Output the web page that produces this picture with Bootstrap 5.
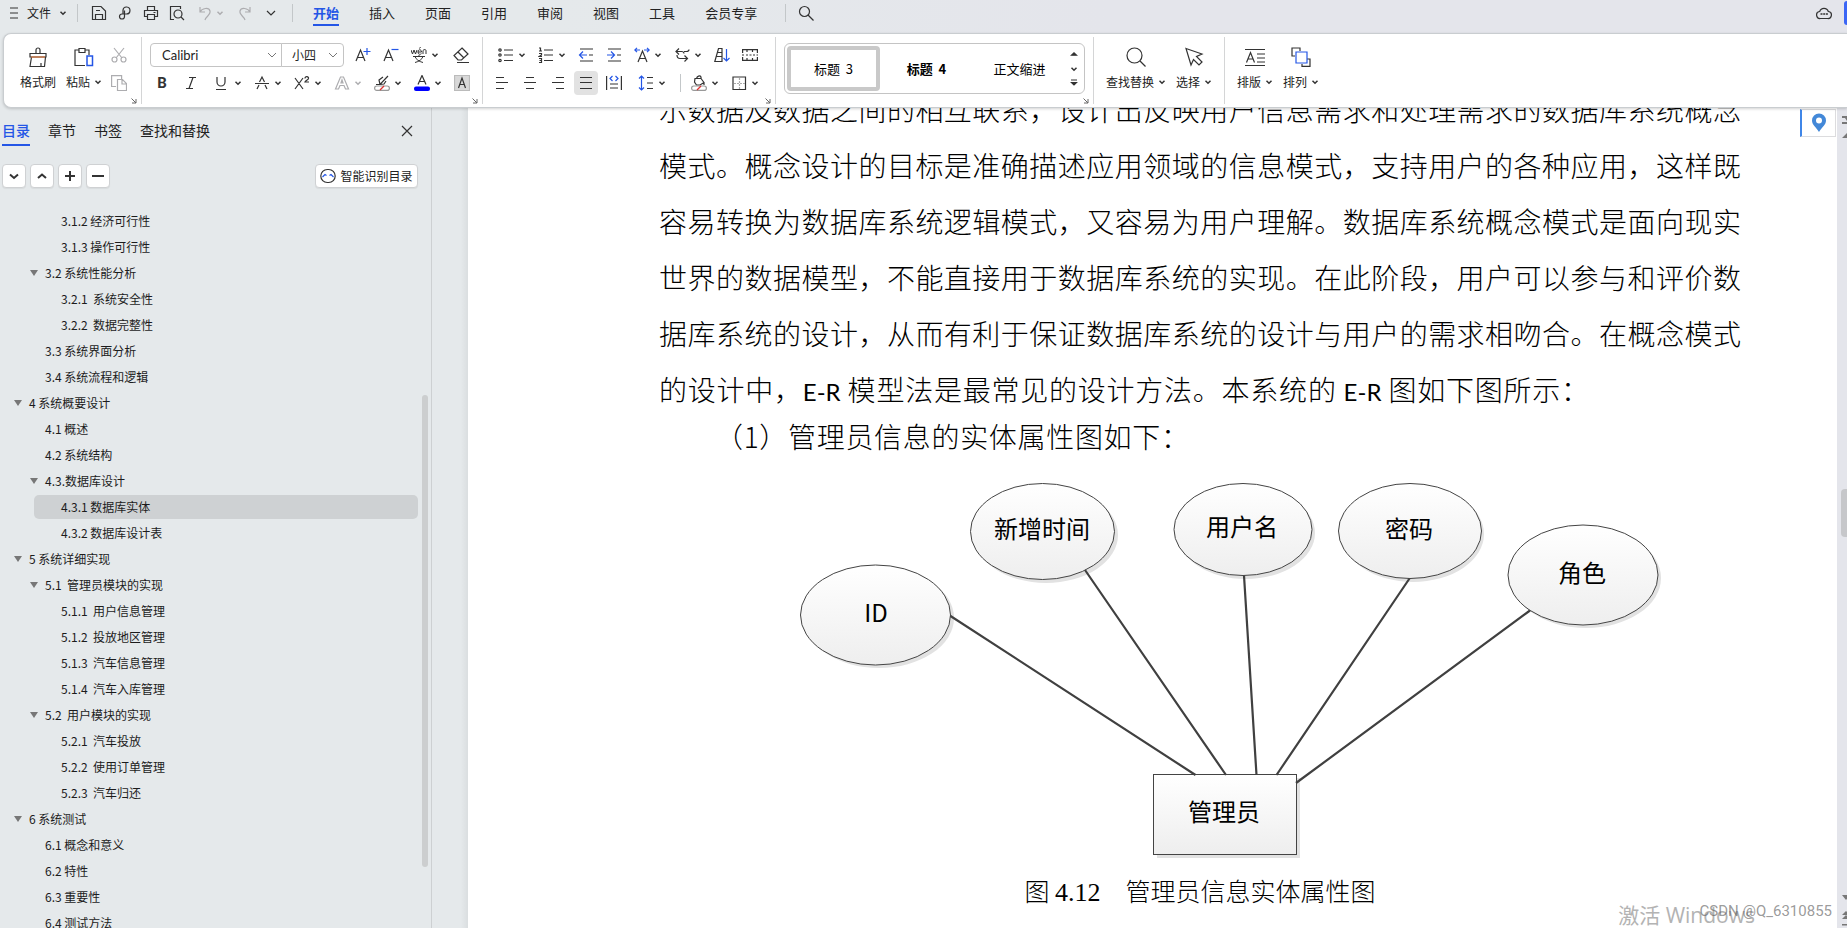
<!DOCTYPE html>
<html lang="zh-CN">
<head>
<meta charset="utf-8">
<meta name="viewport" content="width=device-width, initial-scale=1">
<title>文字编辑器</title>
<link href="https://cdn.jsdelivr.net/npm/bootstrap@5.3.0/dist/css/bootstrap.min.css" rel="stylesheet">
<style>
body{font-family:"Noto Sans CJK SC",sans-serif;font-size:12px;line-height:16px;color:#222;background:linear-gradient(90deg,#e5e9eb,#e5e9eb 30%,#e4e5eb 60%);}
button{background:none;border:0;padding:0;color:inherit;line-height:16px;font-size:inherit}
svg{flex:none;display:block;fill:none;stroke:#333;stroke-width:1.2}
.blue{stroke:#2456e6}
.dim svg{stroke:#adadb0}
.titlebar{height:33px;padding-bottom:8px}
.file-btn{margin:0 10px 0 9px}
.bar-line{width:1px;height:18px;background:#c3c7c9;flex:none}
.q-btn{width:26px;height:24px}
.undo-btn{width:42px}
.menu-row{gap:30px;margin:0 28px 0 20px}
.menu-link{font-size:13px;line-height:22px;color:#222;text-decoration:none;border-bottom:2px solid transparent;height:27px;padding-top:3px}
.menu-link.on{color:#2456e6;font-weight:700;border-color:#2456e6}
.account{width:3px;height:24px;background:#3b66f5;border-radius:4px 0 0 4px;margin-left:12px}
.ribbon{margin-left:3px;height:75px;background:#fff;border:1px solid #c9cdd0;border-right:0;border-radius:8px 0 0 8px;box-shadow:0 1px 3px rgba(0,0,0,.18);z-index:2}
.grp{position:relative;border-right:1px solid #d4d5d6;margin:3px 0 4px;padding-top:4px;height:67px;flex:none}
.g-clip{width:138px;padding-left:13px}.g-font{width:341px;padding-left:6px}.g-para{width:293px;padding-left:5px}.g-style{width:318px;padding:6px 8px}.g-find{width:131px;padding-left:12px}.g-sort{width:110px;padding-left:12px;border:0}
.g-find,.g-sort{gap:10px}
.corner{position:absolute;right:4px;bottom:0}
.big{height:50px;padding-top:4px}
.big svg.ic{margin:0 auto 7px}
.wide{width:42px}
.i28{width:28px;height:28px}.i40{width:40px;height:28px;padding-left:6px;gap:4px}.i32{width:32px;height:28px}
.shade{background:#e2e2e2;border-radius:4px;width:24px;height:24px}
.combo{appearance:none;border:1px solid #c4c4c4;height:24px;font-size:12px;line-height:16px;color:#222;background:#fff url("data:image/svg+xml,%3Csvg xmlns='http://www.w3.org/2000/svg' width='10' height='6'%3E%3Cpath d='M1 1l4 4 4-4' fill='none' stroke='%23777'/%3E%3C/svg%3E") no-repeat right 4px center}
.combo-pair{width:194px;margin:0 5px 0 2px}
.face{width:132px;border-radius:4px 0 0 4px;padding:0 11px;font:13px/18px Lato,"Noto Sans CJK SC",sans-serif}
.pts{width:63px;border-radius:0 4px 4px 0;margin-left:-1px;padding:0 10px;background-position:right 5px center}
.glyph{font-family:Roboto,sans-serif;font-size:15px;color:#333}
.gallery{border:1px solid #c4c4c4;border-radius:6px;height:51px;padding:2px}
.gallery button{font-size:13px;color:#000;width:93px}
.gallery .cur{border:4px solid #c9c9c9;border-radius:4px}
.side{width:432px;border-right:1px solid #cdd0d2;flex:none}
.side-tabs{padding:8px 18px 0 2px;gap:18px}
.side-tabs .tab{font-size:14px;line-height:28px;border-bottom:2px solid transparent;height:30px}
.side-tabs .tab.on{color:#2456e6;border-color:#2456e6;font-weight:500}
.tools{padding:18px 13px 0 2px;gap:4px}
.tool{background:#fff;border:1px solid #cfd1d3;border-radius:4px;height:24px;width:24px;box-shadow:0 1px 1px rgba(0,0,0,.06)}
.smart{width:103px;gap:4px}
.tree{margin:20px 0 0;padding:0;list-style:none}
.tree li{padding:1px 0}
.tree a{display:flex;align-items:center;height:24px;margin-right:13px;color:#1c1c1c;text-decoration:none;white-space:pre;border-radius:5px}
.tree .l1 a{margin-left:14px}.tree .l2 a{margin-left:30px}.tree .l3 a{margin-left:34px;padding-left:27px}
.tree .l1 a::before,.tree .l2 a::before{content:"";width:8px;margin-right:7px;flex:none}
.tree .open a::before{height:0;border:solid transparent;border-top-color:#777;border-width:6px 4px 0}
.tree .sel{background:#ced1d3}
.side-scroll{right:3px;top:287px;width:6px;height:472px;background:#cccecf;border-radius:3px}
.gutter{width:36px;flex:none;background:linear-gradient(90deg,transparent 80%,#dadee0)}
.sheet{background:#fff;padding:0 96px 0 191px;color:#000;font-weight:300;min-width:0}
.prose{font-size:28px;line-height:56px;margin:-27px 0 0}
.ln{display:block;white-space:nowrap;text-align:justify;text-align-last:justify}
.ln.end{padding-right:152px}
.er{font-family:Lato,sans-serif;font-size:24px;font-weight:400}
.point{font-size:28px;line-height:32px;text-indent:2em;margin:0;padding-right:552px;white-space:nowrap;text-align-last:justify}
.diagram{width:100%;height:auto;margin-top:8px}
.diagram text{font-size:24px;font-weight:400;fill:#000;stroke:none;text-anchor:middle}
.cap{font-size:25px;line-height:40px;text-align:center;margin:0}
.cap span{font-family:"Liberation Serif",serif;font-size:26px}
.vscroll{width:10px;background:#e4e5eb;flex:none}
.thumb{position:absolute;left:4px;top:381px;width:10px;height:48px;border-radius:4px;background:#c6c7ca}
.vscroll svg{position:absolute;left:4px;fill:#777;stroke:none}
.marks-top{top:8px}.marks-end{bottom:2px}
.pin{right:1px;top:1px;width:36px;height:28px;background:#fff;border:1px solid #dcdcde;border-left:2px solid #3f86e8}
.activate{right:92px;bottom:0;font:21px/26px "Open Sans","Noto Sans CJK SC",sans-serif;color:#b3b3b3}
.credit{right:15px;bottom:7px;font:15px/20px Roboto,sans-serif;color:rgba(90,90,90,.62)}
</style>
</head>
<body class="vh-100 overflow-hidden d-flex flex-column">
<svg width="0" height="0" class="position-absolute"><defs>
<symbol id="car" viewBox="0 0 8 8"><path d="M1.500 2.800L4 5.200 6.500 2.800" stroke-width="1.500"/></symbol>
<symbol id="cor" viewBox="0 0 6 6"><path d="M.5.5L5 5M5 1V5H1" stroke="#666" stroke-width="1"/></symbol>
</defs></svg>

<header class="titlebar d-flex align-items-center flex-shrink-0">
  <button class="file-btn d-flex align-items-center" type="button"><svg width="10" height="14"><path d="M1 2h8M1 7h8M1 12h8"/></svg><span class="ms-2">文件</span><svg class="ms-2" width="8" height="8"><use href="#car"/></svg></button>
  <span class="bar-line me-2"></span>
  <div class="d-flex align-items-center">
    <button class="q-btn d-flex align-items-center justify-content-center" aria-label="保存" type="button"><svg width="16" height="16"><path d="M1.500 1.500h8.500l4.500 4.500v8.500h-13zM4.500 14v-4.500h7V14M5 5.500h4"/></svg></button>
    <button class="q-btn d-flex align-items-center justify-content-center" aria-label="输出" type="button"><svg width="16" height="16"><path d="M6 9.500V5a3.500 3.500 0 1 1 3.500 4H5a2.500 2.500 0 1 0 2.500 2.500V5.500"/></svg></button>
    <button class="q-btn d-flex align-items-center justify-content-center" aria-label="打印" type="button"><svg width="16" height="16"><path d="M4.500 5V1.500h7V5M4 11.500H1.500v-6h13v6H12M4.500 9.500h7v5h-7zM10.500 7.500h2"/></svg></button>
    <button class="q-btn d-flex align-items-center justify-content-center" aria-label="预览" type="button"><svg width="16" height="16"><path d="M5 14.500H1.500v-13h10V4M12 12l3 3"/><circle cx="9" cy="9" r="4"/></svg></button>
    <button class="undo-btn d-flex align-items-center dim ps-2 gap-1" aria-label="撤销" type="button"><svg width="14" height="16"><path d="M2 2v5h5M2 7c2-4 9-5 10-1s-4 5-5 9"/></svg><svg width="8" height="8"><use href="#car"/></svg></button>
    <button class="q-btn d-flex align-items-center justify-content-center dim" aria-label="恢复" type="button"><svg width="14" height="16"><path d="M12 2v5H7M12 7C10 3 3 2 2 6s4 5 5 9"/></svg></button>
    <button class="q-btn d-flex align-items-center justify-content-center" aria-label="更多" type="button"><svg width="12" height="8"><path d="M2 2l4 4 4-4"/></svg></button>
  </div>
  <span class="bar-line ms-2"></span>
  <nav class="menu-row d-flex">
    <a class="menu-link on" href="#">开始</a><a class="menu-link" href="#">插入</a><a class="menu-link" href="#">页面</a><a class="menu-link" href="#">引用</a><a class="menu-link" href="#">审阅</a><a class="menu-link" href="#">视图</a><a class="menu-link" href="#">工具</a><a class="menu-link" href="#">会员专享</a>
  </nav>
  <span class="bar-line me-2"></span>
  <button class="ms-1" aria-label="搜索" type="button"><svg width="16" height="16"><circle cx="6.500" cy="6.500" r="5"/><path d="M10 10l5.500 5.500"/></svg></button>
  <button class="ms-auto" aria-label="云" type="button"><svg width="16" height="14"><path d="M4.500 12.500a3.500 3.500 0 0 1-.8-7 4.500 4.500 0 0 1 8.600 0 3.500 3.500 0 0 1-.8 7z"/><path d="M4.500 8h2M7.200 8h2M9.900 8h2" stroke-width="1.600"/></svg></button>
  <span class="account"></span>
</header>

<section class="ribbon position-relative d-flex flex-shrink-0">
  <div class="grp g-clip d-flex">
    <button class="big wide" type="button"><svg class="ic" width="20" height="20"><path d="M8 6.500V3a2 2 0 0 1 4 0v3.500M2 6.500h16v3.500H2zM3.500 10L2 19.500h14.500L17.500 10M13 19v-3"/><path d="M3 10h14" stroke="#d9743a"/></svg>格式刷</button>
    <button class="big wide ms-1" type="button"><svg class="ic" width="20" height="20"><path d="M5 3H1v15.500h10M15 8V3h-4M5 1.500h6v4H5z"/><path class="blue" d="M13 9h5.500v9.500H13z" stroke-width="1.500"/></svg><span class="d-flex align-items-center justify-content-center">粘贴<svg class="ms-1" width="8" height="8"><use href="#car"/></svg></span></button>
    <div class="dim d-flex flex-column">
      <button class="i28 d-flex align-items-center justify-content-center" aria-label="剪切" type="button"><svg width="16" height="16"><path d="M3 1l8 10M13 1L5 11"/><circle cx="3.500" cy="12.500" r="2.500"/><circle cx="12.500" cy="12.500" r="2.500"/></svg></button>
      <button class="i28 d-flex align-items-center justify-content-center" aria-label="复制" type="button"><svg width="16" height="16"><path d="M5 11.500H.6V.6h10V4M6.500 4.500h5l4 4v7h-9zM11 5v4h4"/></svg></button>
    </div>
    <svg class="corner" width="6" height="6"><use href="#cor"/></svg>
  </div>
  <div class="grp g-font">
    <div class="d-flex align-items-center">
      <div class="combo-pair d-flex"><select class="combo face" aria-label="字体"><option>Calibri</option></select><select class="combo pts" aria-label="字号"><option>小四</option></select></div>
      <button class="i28 d-flex align-items-center justify-content-center" aria-label="增大字号" type="button"><svg width="16" height="16"><path d="M1 14L5.500 3 10 14M2.500 10.500h6"/><path class="blue" d="M12 1v7M8.500 4.500h7"/></svg></button>
      <button class="i28 d-flex align-items-center justify-content-center" aria-label="减小字号" type="button"><svg width="16" height="16"><path d="M1 14L5.500 3 10 14M2.500 10.500h6"/><path class="blue" d="M8.500 2.500h7"/></svg></button>
      <button class="i40 d-flex align-items-center" aria-label="拼音" type="button"><svg width="16" height="16"><path d="M0 3l1.500 4L3 3l1.500 4L6 3M7 5h3.500c0-3-3.500-3-3.500 0s3 2.500 3.500 1.500M12 7V3.500c1-1.500 3-1 3 0V7M8.500 1.500l1-1.500M2 9.500h12M8 8v1.500M4 9.500c1 3 4 5 8 6M12 9.500c-1 3-4 5-8 6" stroke-width="1"/></svg><svg width="8" height="8"><use href="#car"/></svg></button>
      <button class="i32 d-flex align-items-center justify-content-center" aria-label="清除格式" type="button"><svg width="16" height="16"><path d="M9 1l6 6-6.500 6H5L1 8.500zM5 5l6 6M4 15.500h12"/></svg></button>
    </div>
    <div class="d-flex align-items-center">
      <button class="i28 glyph fw-bold" type="button">B</button>
      <button class="i32 d-flex align-items-center justify-content-center" aria-label="倾斜" type="button"><svg width="16" height="14"><path d="M5 1.500h7M2 12.500h7M9 1.500l-4 11"/></svg></button>
      <button class="i40 d-flex align-items-center" aria-label="下划线" type="button"><svg width="16" height="16"><path d="M3 2v5a4 4 0 0 0 8 0V2M2 14.500h10"/></svg><svg width="8" height="8"><use href="#car"/></svg></button>
      <button class="i40 d-flex align-items-center" aria-label="删除线" type="button"><svg width="16" height="16"><path d="M3 14l2-4M13 14l-2-4M5.500 7L8 2l2.500 5M1 8.500h14"/></svg><svg width="8" height="8"><use href="#car"/></svg></button>
      <button class="i40 d-flex align-items-center" aria-label="上标" type="button"><svg width="16" height="16"><path d="M1 3l8 11M9 3L1 14M11 3.500c0-3 4-2 3.500 0-.5 1.500-3 2-3.500 3.500h4"/></svg><svg width="8" height="8"><use href="#car"/></svg></button>
      <button class="i40 d-flex align-items-center dim" aria-label="文字效果" type="button"><svg width="16" height="16"><path d="M1.500 14L6.500 2h3l5 12h-3L10 10.500H6L4.500 14zM7 8h2L8 5z"/></svg><svg width="8" height="8"><use href="#car"/></svg></button>
      <button class="i40 d-flex align-items-center" aria-label="突出显示" type="button"><svg width="16" height="16"><path d="M2 9.500h4L14 1M6 9.500L5 5l4-3M6 9.500l4-.5 2-3"/><rect x=".6" y="11" width="14.800" height="4.400" rx="2.200" stroke="#999"/><path d="M6 15l4-4" stroke="#d33"/></svg><svg width="8" height="8"><use href="#car"/></svg></button>
      <button class="i40 d-flex align-items-center" aria-label="字体颜色" type="button"><svg width="16" height="16"><path d="M4 9.500L8 .5l4 9M5.500 6.500h5"/><rect y="11.500" width="16" height="4.500" rx="2" fill="#00f" stroke="none"/></svg><svg width="8" height="8"><use href="#car"/></svg></button>
      <button class="i28 d-flex align-items-center justify-content-center" aria-label="字符底纹" type="button"><svg width="16" height="16"><path d="M.5.5h15v15H.5z" fill="#d8d8d8" stroke="#bbb"/><path d="M4.500 13L8 3l3.500 10M5.500 9.500h5"/></svg></button>
    </div>
    <svg class="corner" width="6" height="6"><use href="#cor"/></svg>
  </div>
  <div class="grp g-para">
    <div class="d-flex align-items-center ps-1">
      <button class="i40 d-flex align-items-center" aria-label="项目符号" type="button"><svg width="16" height="16"><path d="M6 3h9M6 8h9M6 13.500h9"/><circle cx="2" cy="3" r="1.200"/><circle cx="2" cy="8" r="1.200"/><circle cx="2" cy="13.500" r="1.200"/></svg><svg width="8" height="8"><use href="#car"/></svg></button>
      <button class="i40 d-flex align-items-center" aria-label="编号" type="button"><svg width="16" height="16"><path d="M6 3h9M6 8h9M6 13.500h9M1 1h1.500v3M1 4h3M1 6.500h2.500V8L1 9.500h3M1 11.500h2.500v4H1M1.500 13.500h2"/></svg><svg width="8" height="8"><use href="#car"/></svg></button>
      <button class="i28 d-flex align-items-center justify-content-center" aria-label="减少缩进" type="button"><svg width="16" height="16"><path d="M2 2h13M11 8h4M2 14h13"/><path class="blue" d="M9 8H1.500M5 4.500L1.500 8 5 11.500"/></svg></button>
      <button class="i28 d-flex align-items-center justify-content-center" aria-label="增加缩进" type="button"><svg width="16" height="16"><path d="M2 2h13M11 8h4M2 14h13"/><path class="blue" d="M1 8h7.500M5 4.500L8.500 8 5 11.500"/></svg></button>
      <button class="i40 d-flex align-items-center" aria-label="字符缩放" type="button"><svg width="16" height="16"><path d="M4 15L8.500 4 13 15M5.500 11.500h6"/><path class="blue" d="M6 3H.8M3 .8L.8 3 3 5.200M10 3h5.200M13 .8L15.200 3 13 5.200"/></svg><svg width="8" height="8"><use href="#car"/></svg></button>
      <button class="i40 d-flex align-items-center" aria-label="换行" type="button"><svg width="16" height="16"><path d="M5 1.500l-3 3 3 3M2 4.500h5.500c2 0 2.500 1 2.500 2M15 2.500c0 1.500-1 2-2.500 2H10M3 8c0 2.500 1 3.500 3 3.500h7.500M10.500 8.500l3 3-3 3"/></svg><svg width="8" height="8"><use href="#car"/></svg></button>
      <button class="i28 d-flex align-items-center justify-content-center" aria-label="排序" type="button"><svg width="16" height="16"><path d="M.8 14.500L4.500 1.500H8v13zM3.500 5.500H8M2.500 9.500H8"/><path class="blue" d="M12.500 2v12M9.500 11l3 3 3-3"/></svg></button>
      <button class="i28 d-flex align-items-center justify-content-center" aria-label="显示标记" type="button"><svg width="16" height="16"><path d="M.6 6V2.600h14.800V6M.6 10v3.400h14.800V10M5 3v2M10.500 3v2M5 11v2M10.500 11v2M0 8h2M4 8h2M7.500 8h2M11 8h2M14.500 8H16"/></svg></button>
    </div>
    <div class="d-flex align-items-center">
      <button class="i28 d-flex align-items-center justify-content-center" aria-label="左对齐" type="button"><svg width="14" height="14"><path d="M1 1.500h8M1 6.500h12M1 12.500h8"/></svg></button>
      <button class="i28 d-flex align-items-center justify-content-center" aria-label="居中" type="button"><svg width="14" height="14"><path d="M3 1.500h8M1 6.500h12M3 12.500h8"/></svg></button>
      <button class="i28 d-flex align-items-center justify-content-center" aria-label="右对齐" type="button"><svg width="14" height="14"><path d="M5 1.500h8M1 6.500h12M5 12.500h8"/></svg></button>
      <button class="i28 d-flex align-items-center justify-content-center" aria-label="两端对齐" type="button"><span class="shade d-flex align-items-center justify-content-center"><svg width="14" height="14"><path d="M1 1.500h12M1 6.500h12M1 12.500h12"/></svg></span></button>
      <button class="i28 d-flex align-items-center justify-content-center" aria-label="分散对齐" type="button"><svg width="16" height="16"><path d="M.6 1v14M15.400 1v14M4 9h8M4 13h8"/><path class="blue" d="M6.500 1L4 3.500 6.500 6M9.500 1L12 3.500 9.500 6"/></svg></button>
      <button class="i40 d-flex align-items-center ms-1" aria-label="行距" type="button"><svg width="16" height="16"><path d="M9 2.500h6M9 8h6M9 13.500h6"/><path class="blue" d="M3.500 1v14M1 3.500L3.500 1 6 3.500M1 12.500L3.500 15 6 12.500"/></svg><svg width="8" height="8"><use href="#car"/></svg></button>
      <span class="bar-line ms-2 me-1"></span>
      <button class="i40 d-flex align-items-center" aria-label="底纹" type="button"><svg width="16" height="16"><path d="M4 3.500h6l3 4-4 2.500H5.500L3.500 7zM5.500 3.500C6 1 9 0 10 2v1.500M13 7.500v2.500"/><rect x=".6" y="11" width="14.800" height="4.400" rx="2.200" stroke="#999"/><path d="M6 15l4-4" stroke="#d33"/></svg><svg width="8" height="8"><use href="#car"/></svg></button>
      <button class="i40 d-flex align-items-center" aria-label="边框" type="button"><svg width="16" height="16"><path d="M2 2h12.500v12.500H2z"/><path d="M8.500 3v11M3 8.500h11" stroke="#aaa" stroke-dasharray="2 1"/></svg><svg width="8" height="8"><use href="#car"/></svg></button>
    </div>
    <svg class="corner" width="6" height="6"><use href="#cor"/></svg>
  </div>
  <div class="grp g-style">
    <div class="gallery d-flex">
      <button class="cur" type="button">标题&nbsp; 3</button><button class="fw-bold" type="button">标题&nbsp; 4</button><button type="button">正文缩进</button>
      <span class="d-flex flex-column justify-content-between align-items-center ms-auto me-1 py-1"><svg width="8" height="8"><path d="M1.500 5.200L4 2.800l2.500 2.400z" fill="#333"/></svg><svg width="8" height="8"><use href="#car"/></svg><svg width="8" height="8"><path d="M1 1h6M1.500 3.500L4 6l2.500-2.500z" fill="#333"/></svg></span>
    </div>
    <svg class="corner" width="6" height="6"><use href="#cor"/></svg>
  </div>
  <div class="grp g-find d-flex">
    <button class="big" type="button"><svg class="ic" width="20" height="20"><circle cx="8.500" cy="8.500" r="7.500"/><path d="M14 14l5.500 5.500"/></svg><span class="d-flex align-items-center">查找替换<svg class="ms-1" width="8" height="8"><use href="#car"/></svg></span></button>
    <button class="big" type="button"><svg class="ic" width="20" height="20"><path d="M2 1.500l16 5.500-5.500 2.500 5.500 5.500-3 3-5.500-5.500L7 18z"/></svg><span class="d-flex align-items-center">选择<svg class="ms-1" width="8" height="8"><use href="#car"/></svg></span></button>
  </div>
  <div class="grp g-sort d-flex">
    <button class="big" type="button"><svg class="ic" width="20" height="20"><path d="M0 2.500h20M12 7h8M12 11h8M12 15h8M0 18.500h20M1.500 15.500l4-10 4 10M3 12h5"/></svg><span class="d-flex align-items-center">排版<svg class="ms-1" width="8" height="8"><use href="#car"/></svg></span></button>
    <button class="big" type="button"><svg class="ic" width="20" height="20"><path d="M4 9H1V1h8v3M16 12h3v7.400h-8V17"/><path class="blue" d="M5 5h11v11H5z"/></svg><span class="d-flex align-items-center">排列<svg class="ms-1" width="8" height="8"><use href="#car"/></svg></span></button>
  </div>
</section>

<main class="d-flex flex-fill overflow-hidden position-relative">
  <aside class="side position-relative">
    <div class="side-tabs d-flex align-items-center">
      <button class="tab on" type="button">目录</button><button class="tab" type="button">章节</button><button class="tab" type="button">书签</button><button class="tab" type="button">查找和替换</button>
      <button class="ms-auto" aria-label="关闭" type="button"><svg width="12" height="12"><path d="M1 1l10 10M11 1L1 11"/></svg></button>
    </div>
    <div class="tools d-flex">
      <button class="tool d-flex align-items-center justify-content-center" aria-label="展开" type="button"><svg width="12" height="12"><path d="M2 4.500L6 8l4-3.500" stroke-width="2"/></svg></button>
      <button class="tool d-flex align-items-center justify-content-center" aria-label="收起" type="button"><svg width="12" height="12"><path d="M2 8l4-3.500L10 8" stroke-width="2"/></svg></button>
      <button class="tool d-flex align-items-center justify-content-center" aria-label="增加" type="button"><svg width="12" height="12"><path d="M1 6h10M6 1v10" stroke-width="2"/></svg></button>
      <button class="tool d-flex align-items-center justify-content-center" aria-label="减少" type="button"><svg width="12" height="12"><path d="M0 6h12" stroke-width="2"/></svg></button>
      <button class="tool smart d-flex align-items-center justify-content-center ms-auto" type="button"><svg width="16" height="16"><rect x=".8" y="1.500" width="14.400" height="13" rx="6.500"/><path class="blue" d="M2.500 9l2.500-2.500 1.500 1M9.500 7.500l1.500-1L13.500 9"/></svg>智能识别目录</button>
    </div>
    <ul class="tree">
      <li class="l3"><a href="#">3.1.2 经济可行性</a></li>
      <li class="l3"><a href="#">3.1.3 操作可行性</a></li>
      <li class="l2 open"><a href="#">3.2 系统性能分析</a></li>
      <li class="l3"><a href="#">3.2.1  系统安全性</a></li>
      <li class="l3"><a href="#">3.2.2  数据完整性</a></li>
      <li class="l2"><a href="#">3.3 系统界面分析</a></li>
      <li class="l2"><a href="#">3.4 系统流程和逻辑</a></li>
      <li class="l1 open"><a href="#">4 系统概要设计</a></li>
      <li class="l2"><a href="#">4.1 概述</a></li>
      <li class="l2"><a href="#">4.2 系统结构</a></li>
      <li class="l2 open"><a href="#">4.3.数据库设计</a></li>
      <li class="l3"><a class="sel" href="#">4.3.1 数据库实体</a></li>
      <li class="l3"><a href="#">4.3.2 数据库设计表</a></li>
      <li class="l1 open"><a href="#">5 系统详细实现</a></li>
      <li class="l2 open"><a href="#">5.1  管理员模块的实现</a></li>
      <li class="l3"><a href="#">5.1.1  用户信息管理</a></li>
      <li class="l3"><a href="#">5.1.2  投放地区管理</a></li>
      <li class="l3"><a href="#">5.1.3  汽车信息管理</a></li>
      <li class="l3"><a href="#">5.1.4  汽车入库管理</a></li>
      <li class="l2 open"><a href="#">5.2  用户模块的实现</a></li>
      <li class="l3"><a href="#">5.2.1  汽车投放</a></li>
      <li class="l3"><a href="#">5.2.2  使用订单管理</a></li>
      <li class="l3"><a href="#">5.2.3  汽车归还</a></li>
      <li class="l1 open"><a href="#">6 系统测试</a></li>
      <li class="l2"><a href="#">6.1 概念和意义</a></li>
      <li class="l2"><a href="#">6.2 特性</a></li>
      <li class="l2"><a href="#">6.3 重要性</a></li>
      <li class="l2"><a href="#">6.4 测试方法</a></li>
    </ul>
    <div class="side-scroll position-absolute"></div>
  </aside>
  <div class="gutter"></div>
  <article class="sheet flex-fill position-relative">
    <p class="prose">
      <span class="ln">示数据及数据之间的相互联系，设计出反映用户信息需求和处理需求的数据库系统概念</span>
      <span class="ln">模式。概念设计的目标是准确描述应用领域的信息模式，支持用户的各种应用，这样既</span>
      <span class="ln">容易转换为数据库系统逻辑模式，又容易为用户理解。数据库系统概念模式是面向现实</span>
      <span class="ln">世界的数据模型，不能直接用于数据库系统的实现。在此阶段，用户可以参与和评价数</span>
      <span class="ln">据库系统的设计，从而有利于保证数据库系统的设计与用户的需求相吻合。在概念模式</span>
      <span class="ln end">的设计中，<span class="er">E-R</span> 模型法是最常见的设计方法。本系统的 <span class="er">E-R</span> 图如下图所示：</span>
    </p>
    <p class="point">（1）管理员信息的实体属性图如下：</p>
    <svg class="diagram" viewBox="659 460 1082 410">
      <defs><linearGradient id="sh" x1="0" y1="0" x2="0" y2="1"><stop offset="0" stop-color="#fff"/><stop offset="1" stop-color="#eee"/></linearGradient></defs>
      <g fill="#e2e2e2" stroke="none"><ellipse cx="879" cy="618" rx="75" ry="50"/><ellipse cx="1046" cy="535" rx="72" ry="48"/><ellipse cx="1246" cy="533" rx="69" ry="46"/><ellipse cx="1413" cy="534" rx="71" ry="48"/><ellipse cx="1586" cy="578" rx="75" ry="50"/><rect x="1157" y="778" width="143" height="80"/></g>
      <g fill="url(#sh)" stroke="#444" stroke-width="1"><ellipse cx="875.500" cy="615" rx="75" ry="50"/><ellipse cx="1042.500" cy="531.500" rx="72" ry="48"/><ellipse cx="1243" cy="529.500" rx="69" ry="46"/><ellipse cx="1410" cy="531" rx="71.500" ry="47.500"/><ellipse cx="1583" cy="575" rx="75" ry="50"/><rect x="1153.500" y="774.500" width="143" height="80"/></g>
      <path d="M950.500 616L1195.500 775M1085 570L1226 775M1244 575.500L1256.500 775M1409.500 578.500L1276.500 775M1530 610.500L1296 783" stroke="#404040" stroke-width="2.200"/>
      <text x="876" y="622">ID</text><text x="1042" y="538">新增时间</text><text x="1242" y="536">用户名</text><text x="1409" y="538">密码</text><text x="1582" y="582">角色</text><text x="1224" y="821">管理员</text>
    </svg>
    <p class="cap">图 <span>4.12</span>　管理员信息实体属性图</p>
    <div class="pin position-absolute d-flex align-items-center justify-content-center"><svg width="16" height="20"><path d="M8 19C5 14 1 12 1 7.500a7 7 0 0 1 14 0C15 12 11 14 8 19z" fill="#4388d8" stroke="none"/><circle cx="8" cy="7.500" r="3" fill="#fff" stroke="none"/></svg></div>
  </article>
  <div class="vscroll position-relative overflow-hidden">
    <svg class="marks-top" width="12" height="22"><path d="M1 0h10v2H1zM1 6h10v2H1zM4 2h4L6 5zM6 17l5 5H1z" /></svg>
    <div class="thumb"></div>
    <svg class="marks-end" width="12" height="33"><path d="M1 2h8L5 7zM1 22l4-4 4 4zM1 26l4-4 4 4zM1 31h8v1.500H1z"/></svg>
  </div>
  <div class="activate position-absolute">激活 Windows</div>
  <div class="credit position-absolute">CSDN @Q_6310855</div>
</main>
<script src="https://cdn.jsdelivr.net/npm/bootstrap@5.3.0/dist/js/bootstrap.bundle.min.js"></script>
</body>
</html>
